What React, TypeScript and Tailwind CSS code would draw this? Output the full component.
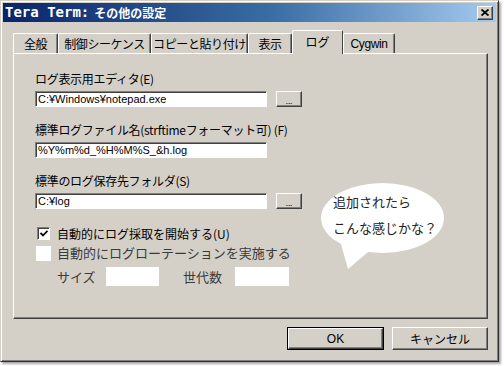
import React from "react";

const ui = { fontFamily: '"Noto Sans CJK JP", "Noto Sans", sans-serif' };
const latin = { fontFamily: '"Liberation Sans", "Noto Sans CJK JP", sans-serif' };

const tabs = [
  { label: "全般", w: "w-[45px]" },
  { label: "制御シーケンス", w: "w-[93px]" },
  { label: "コピーと貼り付け", w: "w-[97px]" },
  { label: "表示", w: "w-[44px]" },
  { label: "ログ", w: "w-[51px]", active: true },
  { label: "Cygwin", w: "w-[52px]" },
];

function Field({ value, browse }: { value: string; browse?: boolean }) {
  return (
    <div className="mt-[4px] flex h-[16px] items-center gap-[9px]">
      <div
        className="flex h-[16px] w-[232px] items-center border border-t-[#808080] border-l-[#808080] border-r-white border-b-white bg-white pl-[2px] text-[11px] text-black shadow-[inset_1px_1px_0_#404040]"
        style={latin}
      >
        {value}
      </div>
      {browse && (
        <div className="flex h-[16px] w-[26px] items-end justify-center border border-t-white border-l-white border-r-[#404040] border-b-[#404040] bg-[#d4d0c8] pb-[1px] text-[8px] leading-[8px] text-black shadow-[inset_-1px_-1px_0_#808080]">
          ...
        </div>
      )}
    </div>
  );
}

export default function App() {
  return (
    <div className="h-[366px] w-[504px] bg-white" style={ui}>
      <div className="flex h-[362px] w-[499px] flex-col border border-t-[#d4d0c8] border-l-[#d4d0c8] border-r-[#303030] border-b-[#303030] bg-[#d4d0c8] p-[2px] shadow-[inset_1px_1px_0_#ffffff,inset_-1px_-1px_0_#808080,2px_2px_2px_rgba(0,0,0,0.35)]">
        {/* title bar */}
        <div className="flex h-[19px] items-center justify-between bg-[linear-gradient(90deg,#0a246a,#3a6ea5_55%,#a6caf0)] pl-[2px] pr-[3px]">
          <div className="flex items-center font-bold text-white">
            <span className="text-[14px] leading-[19px]" style={{ fontFamily: '"DejaVu Sans Mono", monospace' }}>
              Tera Term:
            </span>
            <span className="ml-[5px] text-[12px] leading-[19px]">その他の設定</span>
          </div>
          <div className="flex h-[14px] w-[16px] items-center justify-center border border-t-white border-l-white border-r-[#404040] border-b-[#404040] bg-[#d4d0c8] shadow-[inset_-1px_-1px_0_#808080]">
            <svg width="8" height="7" viewBox="0 0 8 7">
              <path d="M0.5 0.5 L7.5 6.5 M7.5 0.5 L0.5 6.5" stroke="#000" strokeWidth="1.8" />
            </svg>
          </div>
        </div>

        <div className="pl-[10px]">
          {/* tabs */}
          <div className="flex h-[31px] items-end">
            {tabs.map((t) =>
              t.active ? (
                <div
                  key={t.label}
                  className={`${t.w} relative z-10 -mb-px flex h-[24px] items-center justify-center whitespace-nowrap rounded-t-[2px] border border-b-0 border-t-white border-l-white border-r-[#404040] bg-[#d4d0c8] pb-[2px] text-[12px] text-black`}
                >
                  {t.label}
                </div>
              ) : (
                <div
                  key={t.label}
                  className={`${t.w} flex h-[20px] items-center justify-center whitespace-nowrap rounded-t-[2px] border border-b-0 border-t-white border-l-white border-r-[#404040] bg-[#d4d0c8] text-[12px] tracking-[-0.4px] text-black shadow-[inset_-1px_0_0_#808080]`}
                  style={t.label === "Cygwin" ? latin : undefined}
                >
                  {t.label}
                </div>
              ),
            )}
          </div>

          {/* panel */}
          <div className="relative h-[266px] w-[475px] border border-t-white border-l-white border-r-[#404040] border-b-[#404040] pl-[21px] pt-[17px] shadow-[inset_-1px_-1px_0_#808080]">
            <div className="h-[16px] text-[12px] leading-[16px] tracking-[-0.3px] text-black">ログ表示用エディタ(E)</div>
            <Field value="C:¥Windows¥notepad.exe" browse />

            <div className="mt-[15px] h-[16px] text-[12px] leading-[16px] tracking-[-0.3px] text-black">
              標準ログファイル名(strftimeフォーマット可) (F)
            </div>
            <Field value="%Y%m%d_%H%M%S_&h.log" />

            <div className="mt-[15px] h-[16px] text-[12px] leading-[16px] tracking-[-0.3px] text-black">標準のログ保存先フォルダ(S)</div>
            <Field value="C:¥log" browse />

            <div className="mt-[17px] flex h-[15px] items-center gap-[7px] pl-[2px]">
              <div className="flex h-[13px] w-[13px] items-center justify-center border border-t-[#808080] border-l-[#808080] border-r-white border-b-white bg-white shadow-[inset_1px_1px_0_#404040]">
                <svg width="8" height="7" viewBox="0 0 8 7">
                  <path d="M0.5 3 L3 5.5 L7.5 0.8" stroke="#000" strokeWidth="1.8" fill="none" />
                </svg>
              </div>
              <span className="text-[12px] leading-[15px] text-black">自動的にログ採取を開始する(U)</span>
            </div>

            <div className="mt-[4px] flex h-[16px] items-center gap-[6px] pl-[1px]">
              <div className="h-[15px] w-[15px] bg-white" />
              <span className="text-[13px] leading-[16px] text-[#3a3a3a]">自動的にログローテーションを実施する</span>
            </div>

            <div className="mt-[6px] flex h-[19px] items-center pl-[22px] text-[13px] text-[#3a3a3a]">
              <span className="w-[49px]">サイズ</span>
              <div className="h-[19px] w-[53px] bg-white" />
              <span className="ml-[24px] w-[52px]">世代数</span>
              <div className="h-[19px] w-[54px] bg-white" />
            </div>

            {/* speech bubble annotation */}
            <svg className="absolute left-[300px] top-[125px]" width="150" height="95" viewBox="0 0 150 95">
              <ellipse cx="68.5" cy="39" rx="61.5" ry="35" fill="#fff" />
              <path d="M25 58 L34 90 L60 68 Z" fill="#fff" />
            </svg>
            <div className="absolute left-[319px] top-[135px] text-[13px] leading-[26px] text-[#222]">
              <div>追加されたら</div>
              <div>こんな感じかな？</div>
            </div>
          </div>

          {/* buttons */}
          <div className="mt-[8px] flex w-[475px] justify-end gap-[8px]">
            <div className="flex h-[23px] w-[97px] items-center justify-center border border-black text-[12px] text-black">
              <div className="flex h-full w-full items-center justify-center border border-t-white border-l-white border-r-[#404040] border-b-[#404040] shadow-[inset_-1px_-1px_0_#808080]" style={latin}>
                OK
              </div>
            </div>
            <div className="flex h-[23px] w-[96px] items-center justify-center border border-t-white border-l-white border-r-[#404040] border-b-[#404040] text-[12px] text-black shadow-[inset_-1px_-1px_0_#808080]">
              キャンセル
            </div>
          </div>
        </div>
      </div>
    </div>
  );
}
